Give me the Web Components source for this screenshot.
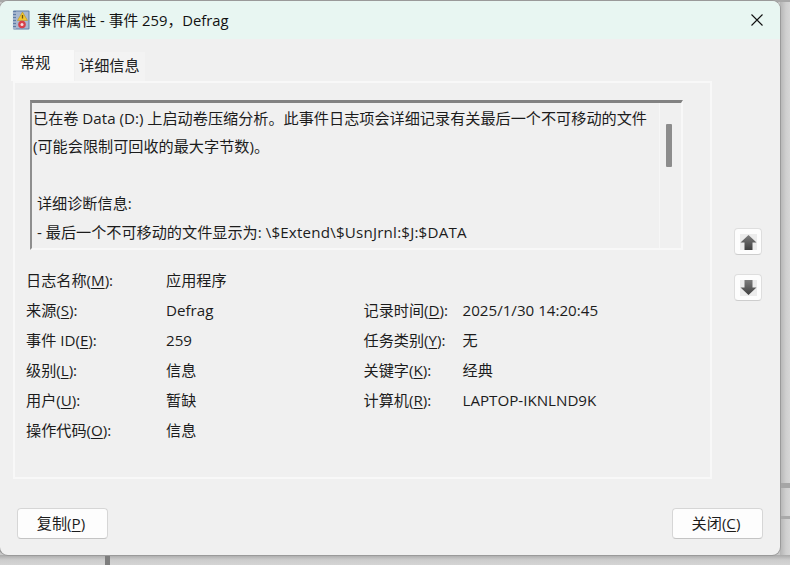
<!DOCTYPE html>
<html lang="zh">
<head>
<meta charset="utf-8">
<title>事件属性</title>
<style>
    html, body { margin: 0; height: 100%; }
    body {
        width: 790px;
        height: 565px;
        overflow: hidden;
        position: relative;
        background: #c9c9c9;
        font-family: "Open Sans", "Noto Sans CJK SC", sans-serif;
        font-size: 15.15px;
        color: #1c1c1c;
    }
    u { text-underline-offset: 2px; text-decoration-thickness: 1px; }
    .path { letter-spacing: .2px; }
</style>
</head>
<body>

<desk-backdrop></desk-backdrop>

<event-window caption="事件属性 - 事件 259，Defrag">
    <event-tabs slot="tabs">
        <tab-item active>常规</tab-item>
        <tab-item>详细信息</tab-item>
    </event-tabs>

    <message-box slot="message">
        <p>已在卷 Data (D:) 上启动卷压缩分析。此事件日志项会详细记录有关最后一个不可移动的文件</p>
        <p>(可能会限制可回收的最大字节数)。</p>
        <p>&nbsp;</p>
        <p>&nbsp;详细诊断信息:</p>
        <p>&nbsp;- 最后一个不可移动的文件显示为: <span class="path">\$Extend\$UsnJrnl:$J:$DATA</span></p>
    </message-box>

    <field-grid slot="fields">
        <field-row><span slot="label">日志名称(<u>M</u>):</span>应用程序</field-row>
        <field-row><span slot="label">来源(<u>S</u>):</span>Defrag<span slot="label2">记录时间(<u>D</u>):</span><span slot="value2">2025/1/30 14:20:45</span></field-row>
        <field-row><span slot="label">事件 ID(<u>E</u>):</span>259<span slot="label2">任务类别(<u>Y</u>):</span><span slot="value2">无</span></field-row>
        <field-row><span slot="label">级别(<u>L</u>):</span>信息<span slot="label2">关键字(<u>K</u>):</span><span slot="value2">经典</span></field-row>
        <field-row><span slot="label">用户(<u>U</u>):</span>暂缺<span slot="label2">计算机(<u>R</u>):</span><span slot="value2">LAPTOP-IKNLND9K</span></field-row>
        <field-row><span slot="label">操作代码(<u>O</u>):</span>信息</field-row>
    </field-grid>

    <arrow-button slot="arrows" dir="up"></arrow-button>
    <arrow-button slot="arrows" dir="down"></arrow-button>

    <push-button slot="left">复制(<u>P</u>)</push-button>
    <push-button slot="right">关闭(<u>C</u>)</push-button>
</event-window>

<script>
class DeskBackdrop extends HTMLElement {
    constructor() {
        super();
        this.attachShadow({mode: "open"});
        this.shadowRoot.innerHTML = `
            <style>
                :host { position: absolute; inset: 0; display: block; }
                div { position: absolute; }
                .shade { left: 780px; top: 0; width: 10px; height: 565px;
                         background: linear-gradient(90deg, #b4b4b4, #cfcfcf 60%, #d6d6d6); }
                .line1 { left: 780px; top: 483px; width: 10px; height: 5px; background: #a6a6a6; }
                .line2 { left: 780px; top: 516px; width: 10px; height: 3px; background: #a9a9a9; }
                .bottom { left: 0; top: 555px; width: 790px; height: 10px;
                          background: linear-gradient(180deg, #a9a9a9, #cdcdcd 50%, #d4d4d4); }
                .post { left: 105px; top: 555px; width: 5px; height: 10px; background: #7d7d7d; }
                .top { left: 0; top: 0; width: 790px; height: 2px; background: #a8a8a8; }
            </style>
            <div class="shade"></div>
            <div class="line1"></div>
            <div class="line2"></div>
            <div class="bottom"></div>
            <div class="post"></div>
            <div class="top"></div>
        `;
    }
}

class EventWindow extends HTMLElement {
    constructor() {
        super();
        this.attachShadow({mode: "open"});
        this.shadowRoot.innerHTML = `
            <style>
                :host {
                    position: absolute;
                    left: 0;
                    top: 1px;
                    width: 780px;
                    height: 554px;
                    display: flex;
                    flex-direction: column;
                    box-sizing: border-box;
                    background: #f0f0f0;
                    border-radius: 8px;
                    overflow: hidden;
                    box-shadow: 0 0 0 1px #9a9a9a;
                }
                .title {
                    height: 38px;
                    flex: none;
                    display: flex;
                    align-items: center;
                    padding-left: 12px;
                    gap: 8px;
                    background: #e8f6f2;
                    color: #111;
                    font-size: 14.8px;
                }
                .title svg.icon { flex: none; }
                .title .caption { flex: 1; position: relative; top: -1px; margin-left: -1px; }
                .close { width: 46px; display: flex; justify-content: center; flex: none; }
                .tabs { height: 42px; flex: none; padding-left: 11px; display: flex; align-items: flex-end; }
                .body { flex: 1; display: flex; align-items: flex-start; }
                .panel {
                    width: 699px;
                    height: 398px;
                    margin-left: 13px;
                    box-sizing: border-box;
                    border: 2px solid #f8f8f8;
                    padding: 17px 0 0 15px;
                }
                .arrows {
                    margin: 147px 0 0 22px;
                    display: flex;
                    flex-direction: column;
                    gap: 19px;
                }
                .fields { margin-top: 15px; }
                .foot {
                    flex: none;
                    display: flex;
                    justify-content: space-between;
                    padding: 0 17px 16px;
                }
            </style>
            <div class="title">
                <svg class="icon" width="18" height="20" viewBox="0 0 18 20">
                    <rect x="1" y="0.5" width="16.5" height="19" rx="1" fill="#5f7da6"/>
                    <rect x="4" y="1.5" width="12.5" height="17" fill="#a9b9d0"/>
                    <path d="M0 3h4M0 6h4M0 9h4M0 12h4M0 15h4M0 18h4" stroke="#dfe5ee" stroke-width="1"/>
                    <path d="M10.5 2 15.5 10.5h-10z" fill="#f2c632" stroke="#b58a10" stroke-width=".5"/>
                    <path d="M10.5 5v3.5" stroke="#6b5408" stroke-width="1.3"/>
                    <circle cx="10" cy="14.5" r="3.8" fill="#d8404a"/>
                    <circle cx="10" cy="14.5" r="1.5" fill="#f6dcdd"/>
                </svg>
                <span class="caption"></span>
                <div class="close">
                    <svg width="12" height="12" viewBox="0 0 12 12">
                        <path d="M.5.5l11 11M11.5.5l-11 11" stroke="#111" stroke-width="1.1" fill="none"/>
                    </svg>
                </div>
            </div>
            <div class="tabs"><slot name="tabs"></slot></div>
            <div class="body">
                <div class="panel">
                    <slot name="message"></slot>
                    <div class="fields"><slot name="fields"></slot></div>
                </div>
                <div class="arrows"><slot name="arrows"></slot></div>
            </div>
            <div class="foot"><slot name="left"></slot><slot name="right"></slot></div>
        `;
    }

    connectedCallback() {
        this.shadowRoot.querySelector(".caption").textContent = this.getAttribute("caption");
    }
}

class EventTabs extends HTMLElement {
    constructor() {
        super();
        this.attachShadow({mode: "open"});
        this.shadowRoot.innerHTML = `
            <style>
                :host { display: flex; align-items: flex-end; }
            </style>
            <slot></slot>
        `;
    }
}

class TabItem extends HTMLElement {
    constructor() {
        super();
        this.attachShadow({mode: "open"});
        this.shadowRoot.innerHTML = `
            <style>
                :host {
                    display: block;
                    box-sizing: border-box;
                    height: 29px;
                    padding: 2px 5px 0 4px;
                    margin-left: 1px;
                    line-height: 22px;
                    background: #f3f3f3;
                    color: #222;
                }
                :host([active]) {
                    height: 31px;
                    width: 63px;
                    margin-left: 0;
                    padding: 1px 0 0 9px;
                    background: #f9f9f9;
                }
            </style>
            <slot></slot>
        `;
    }
}

class MessageBox extends HTMLElement {
    constructor() {
        super();
        this.attachShadow({mode: "open"});
        this.shadowRoot.innerHTML = `
            <style>
                :host {
                    display: block;
                    position: relative;
                    width: 653px;
                    height: 150px;
                    box-sizing: border-box;
                    border: 2px solid #f8f8f8;
                    border-top: 3px solid #828282;
                    border-left: 2px solid #8e8e8e;
                    overflow: hidden;
                }
                .text { padding: .5px 0 0 1px; width: 630px; line-height: 28.6px; white-space: nowrap; }
                ::slotted(p) { margin: 0; }
                .track {
                    position: absolute;
                    top: 0;
                    right: 0;
                    bottom: 0;
                    width: 21px;
                    border-left: 1px solid #f6f6f6;
                }
                .thumb {
                    position: absolute;
                    left: 6px;
                    top: 21px;
                    width: 6px;
                    height: 43px;
                    border-radius: 1px;
                    background: #8c8c8c;
                }
            </style>
            <div class="text"><slot></slot></div>
            <div class="track"><div class="thumb"></div></div>
        `;
    }
}

class FieldGrid extends HTMLElement {
    constructor() {
        super();
        this.attachShadow({mode: "open"});
        this.shadowRoot.innerHTML = `
            <style>
                :host { display: block; margin-left: -4px; }
            </style>
            <slot></slot>
        `;
    }
}

class FieldRow extends HTMLElement {
    constructor() {
        super();
        this.attachShadow({mode: "open"});
        this.shadowRoot.innerHTML = `
            <style>
                :host {
                    display: grid;
                    grid-template-columns: 140px 197.5px 99px 1fr;
                    height: 30px;
                    line-height: 30px;
                    white-space: nowrap;
                }
            </style>
            <div><slot name="label"></slot></div>
            <div><slot></slot></div>
            <div><slot name="label2"></slot></div>
            <div><slot name="value2"></slot></div>
        `;
    }
}

class PushButton extends HTMLElement {
    constructor() {
        super();
        this.attachShadow({mode: "open"});
        this.shadowRoot.innerHTML = `
            <style>
                :host {
                    display: block;
                    width: 91px;
                    height: 31px;
                    box-sizing: border-box;
                    background: #fdfdfd;
                    border: 1px solid #d6d6d6;
                    border-bottom-color: #c4c4c4;
                    border-radius: 4px;
                    padding-right: 3px;
                    text-align: center;
                    line-height: 28px;
                }
            </style>
            <slot></slot>
        `;
    }
}

class ArrowButton extends HTMLElement {
    constructor() {
        super();
        this.attachShadow({mode: "open"});
        const up = this.getAttribute("dir") === "up";
        const d = up ? "M8.5 1 16.5 8.5h-4V16h-8V8.5H.5z" : "M4.5 0h8v7.5h4L8.5 15 .5 7.5h4z";
        this.shadowRoot.innerHTML = `
            <style>
                :host {
                    display: flex;
                    align-items: center;
                    justify-content: center;
                    width: 28px;
                    height: 27px;
                    box-sizing: border-box;
                    background: #fdfdfd;
                    border: 1px solid #dedede;
                    border-bottom-color: #cdcdcd;
                    border-radius: 4px;
                }
                svg { background: #ececec; }
            </style>
            <svg width="17" height="16" viewBox="0 0 17 16">
                <defs>
                    <linearGradient id="g" x1="0" y1="0" x2="0" y2="1">
                        <stop offset="0" stop-color="#7d7d7d"/>
                        <stop offset="1" stop-color="#3f3f3f"/>
                    </linearGradient>
                </defs>
                <path d="${d}" fill="url(#g)"/>
            </svg>
        `;
    }
}

customElements.define("desk-backdrop", DeskBackdrop);
customElements.define("event-window", EventWindow);
customElements.define("event-tabs", EventTabs);
customElements.define("tab-item", TabItem);
customElements.define("message-box", MessageBox);
customElements.define("field-grid", FieldGrid);
customElements.define("field-row", FieldRow);
customElements.define("push-button", PushButton);
customElements.define("arrow-button", ArrowButton);
</script>
</body>
</html>
